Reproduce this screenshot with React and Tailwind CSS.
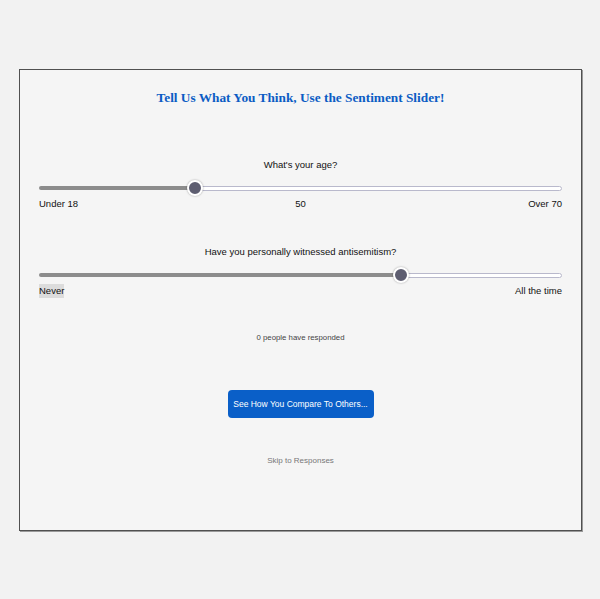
import React from "react";

function Slider({ pct }) {
  return (
    <div className="relative h-[16px] flex items-center">
      <div
        className="h-[4px] rounded-l-full bg-[#8c8c8c]"
        style={{ width: `${pct}%` }}
      />
      <div className="h-[5px] flex-1 rounded-r-full border border-[#b9b9cc] bg-white" />
      <div
        className="absolute top-1/2 h-[16px] w-[16px] -translate-x-1/2 -translate-y-1/2 rounded-full border-2 border-white bg-[#5d5d70] shadow-[0_0_2px_rgba(0,0,0,0.35)]"
        style={{ left: `${pct}%` }}
      />
    </div>
  );
}

export default function App() {
  return (
    <div className="h-[599px] w-[600px] bg-[#f2f2f2] pt-[69px] pl-[19px] font-['Liberation_Sans',Arial,sans-serif]">
      <div className="flex h-[462px] w-[563px] flex-col border border-[#505050] bg-[#f5f5f5] px-[19px] shadow-[1px_1px_0_#9a9a9a]">
        <h1 className="mt-[19px] text-center font-['Liberation_Serif','Times_New_Roman',serif] text-[13.3px] font-bold leading-[18px] text-[#0b5cc4]">
          Tell Us What You Think, Use the Sentiment Slider!
        </h1>

        <p className="mt-[51px] text-center text-[9.5px] leading-[14px] text-[#111]">
          What's your age?
        </p>
        <div className="mt-[8px]">
          <Slider pct={29.8} />
        </div>
        <div className="mt-[1px] grid grid-cols-3 text-[9.5px] leading-[14px] text-[#111]">
          <span className="text-left">Under 18</span>
          <span className="text-center">50</span>
          <span className="text-right">Over 70</span>
        </div>

        <p className="mt-[34px] text-center text-[9.5px] leading-[14px] text-[#111]">
          Have you personally witnessed antisemitism?
        </p>
        <div className="mt-[8px]">
          <Slider pct={69.2} />
        </div>
        <div className="mt-[1px] flex justify-between text-[9.5px] leading-[14px] text-[#111]">
          <span className="bg-[#dcdcdc]">Never</span>
          <span>All the time</span>
        </div>

        <p className="mt-[34px] text-center text-[7.8px] leading-[12px] text-[#444]">
          0 people have responded
        </p>

        <div className="mt-[46px] flex justify-center">
          <button className="h-[28px] w-[146px] rounded-[4px] bg-[#0a5fc8] text-[8.5px] text-white">
            See How You Compare To Others...
          </button>
        </div>

        <p className="mt-[37px] text-center text-[8px] leading-[12px] text-[#777]">
          Skip to Responses
        </p>
      </div>
    </div>
  );
}
